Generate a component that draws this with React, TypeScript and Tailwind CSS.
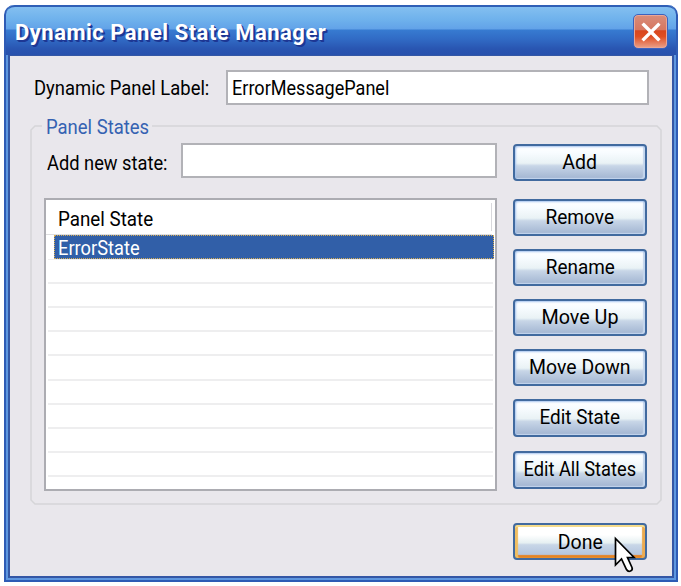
import type { ReactNode } from "react"

const emptyRows = [24, 24, 24, 24, 25, 24, 24, 24, 24]

type PanelButtonProps = {
  children: ReactNode
  className: string
  textClass: string
  focused?: boolean
}

function PanelButton({ children, className, textClass, focused = false }: PanelButtonProps) {
  const glow = focused
    ? "pt-[2px] bg-[linear-gradient(#ffffff_0%,#ffffff_30%,#e6f0f2_54%,#c8d6e7_60%,#adc0dc_100%)] shadow-[inset_0_2px_0_#f5dc8c,inset_3px_0_1px_#f0be62,inset_-3px_0_1px_#ecab50,inset_0_-3px_1px_#e58425]"
    : "bg-[linear-gradient(#ffffff_0%,#f8fcff_20%,#e9f2f5_52%,#c8d6e7_60%,#b9c9df_75%,#a2b5d1_100%)] shadow-[inset_1px_1px_2px_#a6c4ef,inset_-2px_-1px_1px_#c5d6ed]"

  return (
    <button
      className={`w-[134px] shrink-0 flex items-center justify-center rounded-[4px] border-2 border-[#416a9f] whitespace-nowrap ${glow} ${className}`}
    >
      <span className={`inline-block ${textClass}`}>{children}</span>
    </button>
  )
}

function TitleBar() {
  return (
    <div className="h-[50px] shrink-0 flex items-start justify-between pl-[9px] pr-[8px] rounded-t-[9px] border-t-2 border-[#2f5fb6] bg-[linear-gradient(#83bff0_0px,#6eb1ec_13px,#62a2e8_22px,#377bd1_23px,#316bc5_32px,#2955b1_42px,#2851ad_100%)]">
      <h1 className="mt-[12px] text-[22px] leading-[28px] font-bold tracking-[0.5px] text-white [text-shadow:1px_1px_0_#1d3794,2px_2px_0_#1d3794] whitespace-nowrap">
        Dynamic Panel State Manager
      </h1>
      <button
        aria-label="Close"
        className="mt-[7px] size-[35px] flex items-center justify-center rounded-[5px] border border-[#3d62bd] bg-[linear-gradient(#d88d7a_0%,#d77761_44%,#d8471f_48%,#df4e22_65%,#e9a18b_100%)] shadow-[inset_0_0_0_1px_#e9a795]"
      >
        <svg width="22" height="22" viewBox="0 0 22 22" fill="none" stroke="white" strokeWidth="3.4" strokeLinecap="square">
          <path d="M3.8 3.8 18.2 18.2M18.2 3.8 3.8 18.2" />
        </svg>
      </button>
    </div>
  )
}

function StateList() {
  return (
    <div className="w-[453px] h-[293px] shrink-0 border-2 border-[#acacb2] bg-white overflow-hidden">
      <div className="relative h-[35px] mr-[3px] border-b border-[#dedee0] pl-[12px] leading-[38px]">
        <span className="inline-block origin-left scale-x-[.895]">Panel State</span>
        <span className="absolute right-0 top-[3px] h-[28px] w-px bg-[#d8d8dc]" />
      </div>
      <div className="h-[24px] ml-[8px] mr-px pl-[3px] bg-[#315fa8] border border-dotted border-[#d8ad52] text-white leading-[24px]">
        <span className="inline-block origin-left scale-x-[.87]">ErrorState</span>
      </div>
      <div className="mx-[2px] h-px bg-[#eeeeef]" />
      {emptyRows.map((height, i) => (
        <div key={i} className="mx-[2px] border-b-2 border-[#eeeeef]" style={{ height }} />
      ))}
    </div>
  )
}

function PanelStates() {
  return (
    <fieldset className="relative mt-[20px] ml-[20px] w-[632px] h-[380px] pt-[18px] pl-[14px]">
      <svg className="absolute inset-0" width="632" height="380" fill="none" stroke="#d5d5d8" strokeWidth="1.5">
        <path d="M12 1H5L1 5V375L5 379H627L631 375V5L627 1H122" />
      </svg>
      <span className="absolute left-[16px] top-[-11px] leading-[26px] text-[#3562b2] whitespace-nowrap origin-left scale-x-[.88]">
        Panel States
      </span>
      <div className="relative flex">
        <div className="w-[453px]">
          <div className="flex items-center h-[35px] pl-[3px]">
            <label className="w-[134px] leading-[26px] whitespace-nowrap pt-[5px]">
              <span className="inline-block origin-left scale-x-[.87]">Add new state:</span>
            </label>
            <input className="w-[316px] h-[35px] border-2 border-[#b2b2b7] bg-white outline-none" />
          </div>
          <div className="mt-[20px]">
            <StateList />
          </div>
        </div>
        <div className="ml-[16px] mt-px flex flex-col">
          <PanelButton className="h-[37px]" textClass="scale-x-[.93]">Add</PanelButton>
          <PanelButton className="h-[37px] mt-[18px]" textClass="scale-x-[.91]">Remove</PanelButton>
          <PanelButton className="h-[37px] mt-[13px]" textClass="scale-x-[.9]">Rename</PanelButton>
          <PanelButton className="h-[37px] mt-[13px]" textClass="scale-x-[.94]">Move Up</PanelButton>
          <PanelButton className="h-[37px] mt-[13px]" textClass="scale-x-[.925]">Move Down</PanelButton>
          <PanelButton className="h-[38px] mt-[13px]" textClass="scale-x-[.9]">Edit State</PanelButton>
          <PanelButton className="h-[38px] mt-[14px]" textClass="scale-x-[.87]">Edit All States</PanelButton>
        </div>
      </div>
    </fieldset>
  )
}

function Cursor() {
  return (
    <svg className="absolute left-[101px] top-[13px]" width="24" height="38" viewBox="0 0 24 38">
      <path
        d="M1.5 2.5V29L7.5 23L12.5 33.5Q14 36 16.5 35Q19 34 18 31.5L13.5 21.5H20Z"
        fill="white"
        stroke="black"
        strokeWidth="1.7"
      />
    </svg>
  )
}

export default function App() {
  return (
    <div className="w-[681px] h-[586px] bg-white pt-[5px] pl-[4px] font-['Roboto','Liberation_Sans',sans-serif] text-[21px] text-black overflow-hidden">
      <div className="w-[674px] h-[577px] flex flex-col rounded-t-[10px] border-x-2 border-b-2 border-[#2e5bb5] bg-[#5e97df] overflow-hidden">
        <TitleBar />
        <div className="mx-[2px] mb-[2px] flex-1 border-x-2 border-b-2 border-t border-[#3457a5] bg-[#e9e7ec]">
          <div className="flex items-center mt-[14px] pl-[24px]">
            <label className="w-[192px] leading-[26px] whitespace-nowrap">
              <span className="inline-block origin-left scale-x-[.877]">Dynamic Panel Label:</span>
            </label>
            <div className="w-[423px] h-[35px] border-2 border-[#b2b2b7] bg-white pl-[4px] overflow-hidden">
              <input
                defaultValue="ErrorMessagePanel"
                className="w-[470px] h-full origin-left scale-x-[.86] outline-none"
              />
            </div>
          </div>
          <PanelStates />
          <div className="relative ml-[503px] mt-[18px] w-[134px]">
            <PanelButton focused className="h-[37px]" textClass="scale-x-[.93]">
              Done
            </PanelButton>
            <Cursor />
          </div>
        </div>
      </div>
    </div>
  )
}
